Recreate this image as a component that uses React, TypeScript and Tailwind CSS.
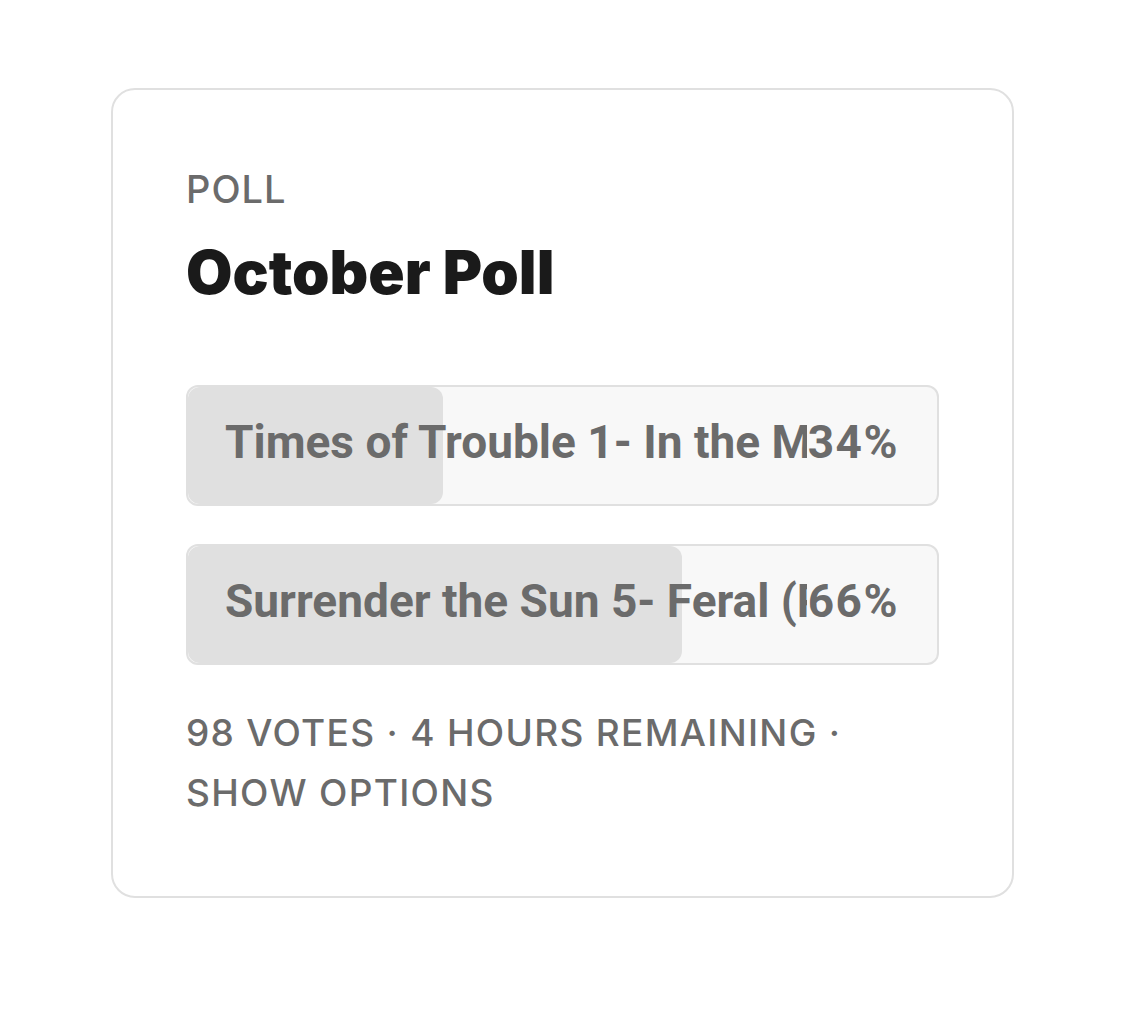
import React from 'react';

const options = [
  { label: 'Times of Trouble 1- In the Mouth of Madness', pct: 34 },
  { label: 'Surrender the Sun 5- Feral (Part 2)', pct: 66 },
];

export default function App() {
  return (
    <div className="min-h-screen bg-white pt-[88px] pl-[111px]">
      <div className="w-[903px] rounded-[24px] border-2 border-[#e0e0e0] bg-white px-[73px] pt-[78px] pb-[73px]">
        <p className="font-['Inter',sans-serif] text-[38px] font-medium leading-[43px] tracking-[1px] text-[#6b6b6b]">POLL</p>
        <h1 className="mt-[25px] font-['Inter',sans-serif] text-[60px] font-black leading-[72px] text-[#1a1a1a]">
          October Poll
        </h1>

        <div className="mt-[77px] flex flex-col gap-[38px]">
          {options.map((o) => (
            <div
              key={o.label}
              className="relative h-[121px] overflow-hidden rounded-[12px] border-2 border-[#e0e0e0] bg-[#f8f8f8]"
            >
              <div
                className="absolute inset-y-0 left-0 rounded-[12px] bg-[#e0e0e0]"
                style={{ width: `${o.pct}%` }}
              />
              <div className="relative flex h-full items-center pl-[37px] pb-[6px] font-['Roboto',sans-serif] text-[46px] font-bold text-[#6b6b6b]">
                <span className="w-[582px] overflow-hidden whitespace-nowrap">{o.label}</span>
                <span className="absolute right-[38px] tracking-[1.5px]">{o.pct}%</span>
              </div>
            </div>
          ))}
        </div>

        <p className="mt-[38px] font-['Inter',sans-serif] text-[37px] font-medium leading-[60px] tracking-[1.3px] text-[#6b6b6b]">
          98 VOTES · 4 HOURS REMAINING · SHOW OPTIONS
        </p>
      </div>
    </div>
  );
}
